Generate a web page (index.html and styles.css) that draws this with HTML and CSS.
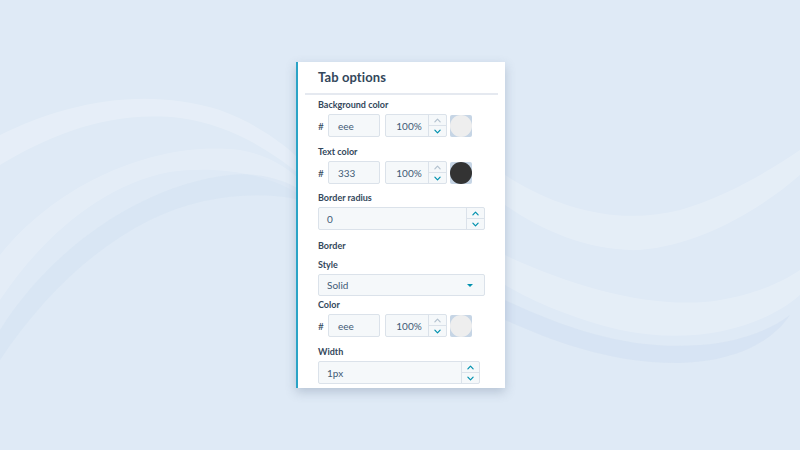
FILE: index.html
```html
<!DOCTYPE html>
<html>
<head>
<meta charset="utf-8">
<link rel="stylesheet" href="styles.css">
</head>
<body>
<div class="panel">
  <div class="title">Tab options</div>
  <div class="divider"></div>

  <div class="field f-first">
    <div class="label">Background color</div>
    <div class="color-row">
      <span class="hash">#</span>
      <div class="input hex">eee</div>
      <div class="input pct">
        <span class="val">100%</span>
        <div class="spin">
          <span class="up off"><svg viewBox="0 0 8 5"><path d="M1 4 4 1 7 4"/></svg></span>
          <span class="down"><svg viewBox="0 0 8 5"><path d="M1 1 4 4 7 1"/></svg></span>
        </div>
      </div>
      <div class="swatch"><div class="dot light"></div></div>
    </div>
  </div>

  <div class="field f-gap">
    <div class="label">Text color</div>
    <div class="color-row">
      <span class="hash">#</span>
      <div class="input hex">333</div>
      <div class="input pct">
        <span class="val">100%</span>
        <div class="spin">
          <span class="up off"><svg viewBox="0 0 8 5"><path d="M1 4 4 1 7 4"/></svg></span>
          <span class="down"><svg viewBox="0 0 8 5"><path d="M1 1 4 4 7 1"/></svg></span>
        </div>
      </div>
      <div class="swatch"><div class="dot dark"></div></div>
    </div>
  </div>

  <div class="field f-gap-s">
    <div class="label">Border radius</div>
    <div class="input num wide">
      <span class="val">0</span>
      <div class="spin">
        <span class="up"><svg viewBox="0 0 8 5"><path d="M1 4 4 1 7 4"/></svg></span>
        <span class="down"><svg viewBox="0 0 8 5"><path d="M1 1 4 4 7 1"/></svg></span>
      </div>
    </div>
  </div>

  <div class="label section">Border</div>

  <div class="field f-style">
    <div class="label">Style</div>
    <div class="input select">
      <span class="val">Solid</span>
      <span class="caret"></span>
    </div>
  </div>

  <div class="field f-color">
    <div class="label">Color</div>
    <div class="color-row">
      <span class="hash">#</span>
      <div class="input hex">eee</div>
      <div class="input pct">
        <span class="val">100%</span>
        <div class="spin">
          <span class="up off"><svg viewBox="0 0 8 5"><path d="M1 4 4 1 7 4"/></svg></span>
          <span class="down"><svg viewBox="0 0 8 5"><path d="M1 1 4 4 7 1"/></svg></span>
        </div>
      </div>
      <div class="swatch"><div class="dot light"></div></div>
    </div>
  </div>

  <div class="field f-gap2">
    <div class="label">Width</div>
    <div class="input num narrow">
      <span class="val">1px</span>
      <div class="spin">
        <span class="up"><svg viewBox="0 0 8 5"><path d="M1 4 4 1 7 4"/></svg></span>
        <span class="down"><svg viewBox="0 0 8 5"><path d="M1 1 4 4 7 1"/></svg></span>
      </div>
    </div>
  </div>
</div>
</body>
</html>
```

FILE: styles.css
```css
html, body {
  margin: 0;
  padding: 0;
}
body {
  width: 800px;
  height: 450px;
  overflow: hidden;
  font-family: "Lato", "Noto Sans", sans-serif;
  color: #33475b;
  background-color: #dfeaf6;
  background-image: url("data:image/svg+xml;utf8,<svg xmlns='http://www.w3.org/2000/svg' width='800' height='450' viewBox='0 0 800 450'><g stroke='none'><path d='M0 135 C 60 105 140 85 220 110 C 260 125 285 145 300 160 L 300 175 C 270 150 230 125 180 118 C 110 110 50 135 0 165 Z' fill='%23ffffff' fill-opacity='0.22'/><path d='M0 255 C 60 180 160 140 240 150 C 270 155 290 170 300 180 L 300 195 C 270 175 220 165 170 172 C 100 185 40 240 0 300 Z' fill='%23ffffff' fill-opacity='0.18'/><path d='M0 330 C 50 250 140 185 230 175 C 260 172 285 180 300 190 L 300 200 C 260 190 200 195 150 220 C 90 250 40 300 0 360 Z' fill='%23c9dbef' fill-opacity='0.25'/><path d='M505 175 C 560 210 620 225 680 210 C 730 195 770 170 800 150 L 800 175 C 760 210 700 245 640 250 C 590 252 540 230 505 205 Z' fill='%23ffffff' fill-opacity='0.2'/><path d='M505 255 C 580 290 660 310 720 300 C 760 293 785 280 800 270 L 800 295 C 760 330 690 345 620 330 C 570 318 530 300 505 285 Z' fill='%23ffffff' fill-opacity='0.2'/><path d='M505 300 C 570 330 630 350 700 345 C 740 342 770 330 790 315 C 770 345 730 362 680 363 C 610 364 550 340 505 320 Z' fill='%23c6d8ee' fill-opacity='0.3'/></g></svg>");
  background-repeat: no-repeat;
  display: flex;
  justify-content: center;
  align-items: flex-start;
  box-sizing: border-box;
  padding-top: 62px;
  padding-left: 1px;
}
.panel {
  width: 207px;
  background: #ffffff;
  border-left: 2px solid #2ba3c6;
  box-shadow: 0 4px 10px rgba(60, 80, 110, 0.25);
  padding: 7px 0 4px 0;
  box-sizing: content-box;
}
.title {
  font-weight: 700;
  font-size: 13px;
  line-height: 16px;
  height: 16px;
  padding-left: 20px;
  letter-spacing: 0.1px;
}
.divider {
  height: 2px;
  background: #e5e9f0;
  margin: 8px 7px 0 7px;
}
.field {
  padding-left: 20px;
}
.label {
  font-weight: 700;
  font-size: 9px;
  line-height: 12px;
  height: 12px;
  margin-bottom: 3px;
}
.label.section {
  padding-left: 20px;
  margin-top: 10px;
  margin-bottom: 0;
}
.f-first { margin-top: 4px; }
.f-gap { margin-top: 9px; }
.f-gap-s { margin-top: 8px; }
.f-gap2 { margin-top: 9px; }
.f-style { margin-top: 7px; }
.f-color { margin-top: 3px; }

.color-row {
  display: flex;
  align-items: center;
  height: 23px;
}
.hash {
  font-size: 10px;
  width: 10px;
  color: #33475b;
}
.input {
  box-sizing: border-box;
  height: 23px;
  background: #f5f8fa;
  border: 1px solid #dbe2ea;
  border-radius: 2px;
  display: flex;
  align-items: center;
  font-size: 10px;
  color: #425b76;
}
.hex {
  width: 52px;
  padding-left: 9px;
}
.pct {
  width: 62px;
  margin-left: 5px;
}
.pct .val {
  flex: 1;
  text-align: center;
  padding-left: 4px;
}
.num .val, .select .val {
  flex: 1;
  padding-left: 8px;
}
.wide { width: 167px; }
.narrow { width: 162px; }
.select {
  width: 167px;
  height: 22px;
  justify-content: space-between;
}
.caret {
  width: 0;
  height: 0;
  border-left: 3.5px solid transparent;
  border-right: 3.5px solid transparent;
  border-top: 3.5px solid #0091ae;
  margin-right: 11px;
}
.spin {
  width: 17px;
  height: 100%;
  border-left: 1px solid #dbe2ea;
  display: flex;
  flex-direction: column;
}
.spin span {
  flex: 1;
  display: flex;
  align-items: center;
  justify-content: center;
}
.spin .up {
  border-bottom: 1px solid #dbe2ea;
}
.spin svg {
  width: 7px;
  height: 5px;
}
.spin path {
  fill: none;
  stroke: #0091ae;
  stroke-width: 1.4;
  stroke-linecap: round;
  stroke-linejoin: round;
}
.spin .off path {
  stroke: #b3c1cf;
}
.swatch {
  width: 22px;
  height: 22px;
  margin-left: 3px;
  background: #c6d5e5;
  border-radius: 2px;
  display: flex;
  align-items: center;
  justify-content: center;
}
.dot {
  width: 22px;
  height: 22px;
  border-radius: 50%;
}
.dot.light { background: #eeeeee; }
.dot.dark { background: #333333; }
```
